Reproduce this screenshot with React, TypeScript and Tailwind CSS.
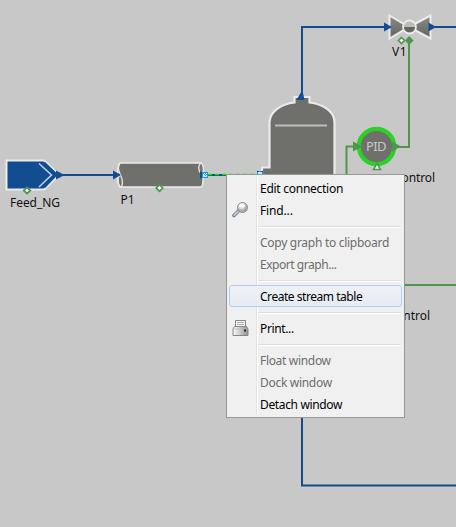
import React from "react";

type Item = { label: string; spacing: string; icon?: "find" | "print"; disabled?: boolean; active?: boolean };

const groups: Item[][] = [
  [
    { label: "Edit connection", spacing: "tracking-[-0.27px]" },
    { label: "Find...", spacing: "tracking-[-0.15px]", icon: "find" },
  ],
  [
    { label: "Copy graph to clipboard", spacing: "tracking-[-0.28px]", disabled: true },
    { label: "Export graph...", spacing: "tracking-[-0.46px]", disabled: true },
  ],
  [{ label: "Create stream table", spacing: "tracking-[-0.46px]", active: true }],
  [{ label: "Print...", spacing: "tracking-[-0.36px]", icon: "print" }],
  [
    { label: "Float window", spacing: "tracking-[-0.32px]", disabled: true },
    { label: "Dock window", spacing: "tracking-[-0.3px]", disabled: true },
    { label: "Detach window", spacing: "tracking-[-0.35px]" },
  ],
];

function FindIcon() {
  return (
    <svg width="18" height="18" viewBox="0 0 18 18">
      <defs>
        <radialGradient id="lens" cx="40%" cy="30%">
          <stop offset="0" stopColor="#fff" />
          <stop offset=".6" stopColor="#dedede" />
          <stop offset="1" stopColor="#aaa" />
        </radialGradient>
      </defs>
      <path d="M7 10.5 3 14.5" stroke="#777" strokeWidth="3.6" strokeLinecap="round" />
      <path d="M7 10.5 3.2 14.2" stroke="#b5c7de" strokeWidth="2" strokeLinecap="round" />
      <circle cx="11.500" cy="6.500" r="5" fill="url(#lens)" stroke="#8d8d8d" />
      <ellipse cx="11" cy="4.600" rx="2.700" ry="1.700" fill="#fff" />
    </svg>
  );
}

function PrintIcon() {
  return (
    <svg width="18" height="18" viewBox="0 0 18 18">
      <defs>
        <linearGradient id="body">
          <stop offset="0" stopColor="#fafafa" />
          <stop offset="1" stopColor="#929292" />
        </linearGradient>
      </defs>
      <path d="M4.500 7.500v-6h10v6" fill="#f8f8f8" stroke="#858585" />
      <path d="M6 3.500h7M6 5.500h7" stroke="#ababab" />
      <path d="M3.500 7.500h12l1.500 2.500v6.500H2v-6.500z" fill="url(#body)" stroke="#858585" />
      <path d="M2.500 10h14" stroke="#bbb" strokeWidth=".7" />
      <rect x="13" y="10.500" width="2" height="2" fill="#222" />
    </svg>
  );
}

function ContextMenu() {
  return (
    <div className="absolute left-[226px] top-[174px] h-[244px] w-[179px] border border-[#979797] bg-[#f0f0f0] px-[2px] py-[2px]">
      <div className="absolute bottom-[2px] left-[29px] top-[2px] w-[2px] border-l border-[#e2e3e3] bg-white" />
      {groups.map((group, g) => (
        <React.Fragment key={g}>
          {g > 0 && (
            <div className="flex h-[10px] items-end pb-[3px] pl-[28px] pr-px">
              <div className="h-[2px] w-full border-t border-[#dedede] bg-white" />
            </div>
          )}
          {group.map((item) => (
            <div
              key={item.label}
              className={
                item.active
                  ? "relative flex h-[22px] items-center rounded-[3px] border border-[#aecff7] bg-linear-to-b from-[#eff1f4]/90 to-[#e4ebf3]/90"
                  : "relative flex h-[22px] items-center border border-transparent"
              }
            >
              <div className="flex w-[30px] shrink-0 pl-[1px]">
                {item.icon === "find" && <FindIcon />}
                {item.icon === "print" && <PrintIcon />}
              </div>
              <span className={`whitespace-nowrap pt-px text-[12px] leading-5 ${item.spacing} ${item.disabled ? "text-[#6d6d6d]" : "text-black"}`}>
                {item.label}
              </span>
            </div>
          ))}
        </React.Fragment>
      ))}
    </div>
  );
}

function Diagram() {
  return (
    <svg className="block" width="456" height="527" viewBox="0 0 456 527" fontSize="12" fill="none">
      <defs>
        <linearGradient id="valve" x1="0" y1="0" x2="0" y2="1">
          <stop offset="0" stopColor="#8a8a87" />
          <stop offset="1" stopColor="#646461" />
        </linearGradient>
      </defs>

      {/* Process streams */}
      <g stroke="#124c91" strokeWidth="2">
        <path d="M60 175H116" />
        <path d="M302 95V27H386" />
        <path d="M432 27H456" />
        <path d="M302 417V485.500H456" />
        <path d="M206 175H262" />
      </g>
      <path d="M208 174.500H262" stroke="#00f000" strokeWidth="1.300" strokeDasharray="4 3" />

      {/* Control signals */}
      <g stroke="#4c974c" strokeWidth="2">
        <path d="M346.500 176V146.500H356" />
        <path d="M395 147H409V42" />
        <path d="M404 285H456" />
      </g>

      {/* Feed */}
      <path d="M6.500 160.500H44L56 172V178L44 189.500H6.500Z" fill="#124c91" stroke="#ebebeb" strokeWidth="2" />
      <path d="M39 163.500 51.500 175 39 187" stroke="#c5cddb" strokeWidth="1.6" />
      <path d="M44 163 56 174.500 44 187" stroke="#124c91" strokeWidth="3" />
      <path d="M56 170.500 64.500 175 56 179.500Z" fill="#124c91" />
      <path d="M27 187.500 30.300 190.500 27 193.500 23.700 190.500Z" fill="#fff" stroke="#4c974c" strokeWidth="1.7" />

      {/* Pipe */}
      <path d="M120 163H201C204 163 204 187 201 187H120C117 184 117 166 120 163Z" fill="#6f6f6c" stroke="#ececec" strokeWidth="1.7" />
      <path d="M119 164C117 168 120 174 121 176C124 183 122 187 120 187C117 183 117 176 121 175" stroke="#e8e8e8" strokeWidth="1.3" />
      <path d="M201 163C197 166 199 173 202 174C204 174 204 165 201 163Z" fill="#777774" stroke="#e8e8e8" strokeWidth="1.3" />
      <path d="M113 170.500 121 175 113 179.500Z" fill="#124c91" />
      <path d="M200 171 207 175 200 179Z" fill="#124c91" />
      <rect x="202.500" y="172.500" width="5" height="5" fill="#c8ecff" stroke="#159be8" />
      <path d="M203 173.500h1M205 173.500h1M204 174.500h1M206 174.500h1M205 175.500h1" stroke="#3c91ce" />
      <path d="M159.500 184.800 162.800 188 159.500 191.200 156.200 188Z" fill="#fff" stroke="#4c974c" strokeWidth="1.7" />

      {/* Column */}
      <path
        d="M262 179V167.500H269.500V122C270 111 282 104 294.500 102.500V97H309.500V102.500C322 104 334.500 111 334.500 122V179Z"
        fill="#6f6f6c"
        stroke="#ebebeb"
        strokeWidth="2.2"
      />
      <path d="M275 125.500H327" stroke="#bebebc" strokeWidth="2" />
      <path d="M296.500 100 300.500 93H303L304.500 100Z" fill="#124c91" />
      <rect x="257.500" y="171.500" width="5" height="5" fill="#c8ecff" stroke="#159be8" />
      <path d="M257 171.500h2M261 171.500h2" stroke="#124c91" />

      {/* PID controller */}
      <circle cx="376.500" cy="146.500" r="17.700" fill="#6f6f6c" stroke="#2bd226" strokeWidth="4.200" />
      <path d="M353 141.500 362 146.500 353 151.500ZM392 141.500 401 146.500 392 151.500Z" fill="#4c974c" />
      <text x="366" y="151" fontSize="13" fill="#c8c8c6" textLength="20.500">PID</text>
      <path d="M377 163.500 380.500 169.500H373.500Z" fill="#fff" stroke="#4c974c" strokeWidth="1.500" />

      {/* Valve */}
      <path d="M389.500 15.500 409 27 430.500 15.500V38.500L409 27 389.500 38.500Z" fill="url(#valve)" stroke="#ececec" strokeWidth="2" />
      <circle cx="409.500" cy="27" r="6.500" fill="#bcbcba" stroke="#ececec" strokeWidth="1.800" />
      <path d="M404 27H415C415 34 404 34 404 27Z" fill="#666663" />
      <path d="M384 22.500 392 27 384 31.500ZM428.500 22.500 436 27 428.500 31.500Z" fill="#124c91" />
      <path d="M401.500 37.500 404.500 40.500 401.500 43.500 398.500 40.500Z" fill="#fff" stroke="#4c974c" strokeWidth="1.600" />
      <path d="M409.200 36 413.500 40.500 409.200 45 405 40.500Z" fill="#4c974c" />

      <g fill="#111">
        <text x="10" y="207" textLength="50">Feed_NG</text>
        <text x="120.500" y="204" textLength="14">P1</text>
        <text x="392" y="56" textLength="14.500">V1</text>
        <text x="396" y="182" textLength="39">control</text>
        <text x="396" y="320" textLength="34">ontrol</text>
      </g>
    </svg>
  );
}

export default function App() {
  return (
    <main className="relative h-[527px] w-[456px] overflow-hidden bg-[#c8c8c8] font-['Noto_Sans','Open_Sans',sans-serif]">
      <Diagram />
      <ContextMenu />
    </main>
  );
}
